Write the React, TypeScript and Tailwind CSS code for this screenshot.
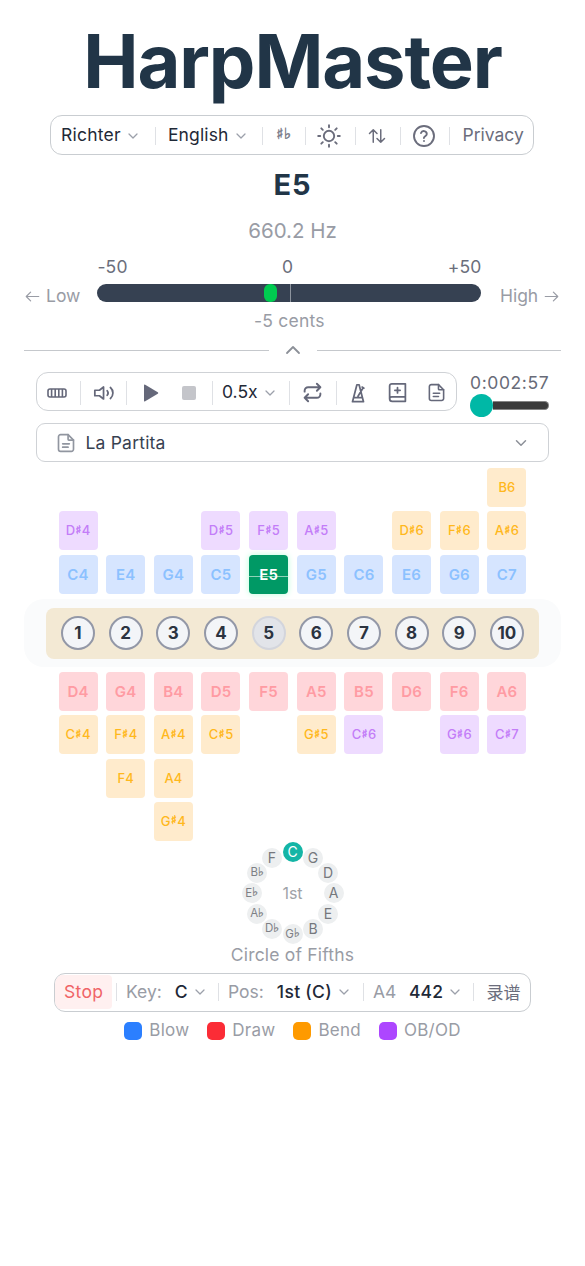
import React from 'react';
import { ChevronDown, ChevronUp } from 'lucide-react';

const noteStyles = {
  blow: 'bg-[#d6e5ff] text-[#8cc1ff] text-[15px] font-semibold tracking-[0.2px]',
  draw: 'bg-[#ffd6da] text-[#ff9ba3] text-[15px] font-semibold tracking-[0.2px]',
  bend: 'bg-[#ffebcc] text-[#ffb81c] text-[13px] font-medium',
  over: 'bg-[#eedbff] text-[#c37df8] text-[13px] font-medium',
};

type Kind = keyof typeof noteStyles;
type Cell = [string, Kind] | null;

const top: Cell[][] = [
  [null, null, null, null, null, null, null, null, null, ['B6', 'bend']],
  [['D♯4', 'over'], null, null, ['D♯5', 'over'], ['F♯5', 'over'], ['A♯5', 'over'], null, ['D♯6', 'bend'], ['F♯6', 'bend'], ['A♯6', 'bend']],
  ['C4', 'E4', 'G4', 'C5', 'E5', 'G5', 'C6', 'E6', 'G6', 'C7'].map((n): Cell => [n, 'blow']),
];

const bottom: Cell[][] = [
  ['D4', 'G4', 'B4', 'D5', 'F5', 'A5', 'B5', 'D6', 'F6', 'A6'].map((n): Cell => [n, 'draw']),
  [['C♯4', 'bend'], ['F♯4', 'bend'], ['A♯4', 'bend'], ['C♯5', 'bend'], null, ['G♯5', 'bend'], ['C♯6', 'over'], null, ['G♯6', 'over'], ['C♯7', 'over']],
  [null, ['F4', 'bend'], ['A4', 'bend'], null, null, null, null, null, null, null],
  [null, null, ['G♯4', 'bend'], null, null, null, null, null, null, null],
];

function NoteName({ name }: { name: string }) {
  const parts = name.split(/([♯♭])/);
  return (
    <span className="flex items-center whitespace-nowrap leading-none">
      {parts.map((p, i) =>
        p === '♯' ? <span key={i} className="-mt-[2px] px-[0.5px] text-[12px] leading-none font-bold [-webkit-text-stroke:0.5px] [font-family:'DejaVu_Sans',sans-serif]">♯</span>
        : p === '♭' ? <span key={i} className="-mt-[2px] text-[12px] leading-none font-bold [-webkit-text-stroke:0.3px] [font-family:'DejaVu_Sans',sans-serif]">♭</span>
        : <span key={i}>{p}</span>,
      )}
    </span>
  );
}

function NoteRows({ rows }: { rows: Cell[][] }) {
  return (
    <div className="ml-[58.5px] flex w-[468px] flex-col gap-[4.4px]">
      {rows.map((row, r) => (
        <div key={r} className="flex h-[39px] justify-between">
          {row.map((cell, c) => {
            if (!cell) return <div key={c} className="w-[39px]" />;
            if (cell[0] === 'E5')
              return (
                <div key={c} className="relative flex w-[39px] items-center justify-center rounded-[4px] bg-[#009965] text-[15px] font-semibold text-white shadow-[0_0_6px_#b8ffda]">
                  <div className="absolute inset-x-0 top-[21px] h-[1.5px] bg-[#8fd2b8]" />
                  <span className="relative leading-none">E5</span>
                </div>
              );
            return (
              <div key={c} className={`flex w-[39px] items-center justify-center rounded-[4px] ${noteStyles[cell[1]]}`}>
                <NoteName name={cell[0]} />
              </div>
            );
          })}
        </div>
      ))}
    </div>
  );
}

function Divider({ tall = false }: { tall?: boolean }) {
  return <div className={tall ? 'h-6 w-px shrink-0 bg-[#dfe1e5]' : 'h-[18px] w-px shrink-0 bg-[#dfe1e5]'} />;
}

function Chevron({ className = '' }: { className?: string }) {
  return <ChevronDown size={16} strokeWidth={1.9} className={`mx-px shrink-0 text-[#9ca0aa] ${className}`} />;
}

function Stroke({ size, width = 2, children, className = '' }: { size: number; width?: number; children: React.ReactNode; className?: string }) {
  return (
    <svg width={size} height={size} viewBox="0 0 24 24" fill="none" stroke="currentColor" strokeWidth={width} strokeLinecap="round" strokeLinejoin="round" className={`shrink-0 ${className}`}>
      {children}
    </svg>
  );
}

function PageIcon({ size, className = '' }: { size: number; className?: string }) {
  return (
    <Stroke size={size} className={className}>
      <path d="M14.5 2H5.5A2.5 2.5 0 0 0 3 4.5v15A2.5 2.5 0 0 0 5.5 22h13a2.5 2.5 0 0 0 2.500-2.500V8.500z" />
      <path d="M14.500 2v5.500a1 1 0 0 0 1 1H21M8 13h8M8 17h6.500" />
    </Stroke>
  );
}

const fifths = ['C', 'G', 'D', 'A', 'E', 'B', 'G♭', 'D♭', 'A♭', 'E♭', 'B♭', 'F'];

function CircleOfFifths() {
  return (
    <div className="relative mx-auto mt-[1.5px] h-[102px] w-[102px]">
      {fifths.map((name, i) => {
        const a = (i * Math.PI) / 6;
        return (
          <div
            key={name}
            className={`absolute flex h-5 w-5 items-center justify-center rounded-full ${
              i === 0 ? 'bg-[#14b5a6] text-[14px] text-white' : name.length > 1 ? 'bg-[#edeff0] text-[11.5px] text-[#7d8085]' : 'bg-[#edeff0] text-[14px] text-[#75787d]'
            }`}
            style={{ left: 41 + Math.sin(a) * 41, top: 41 - Math.cos(a) * 41 }}
          >
            <NoteName name={name} />
          </div>
        );
      })}
      <div className="flex h-full items-center justify-center text-[16px] text-[#a0a3a8]">1st</div>
    </div>
  );
}

function Legend({ color, label }: { color: string; label: string }) {
  return (
    <div className="flex items-center gap-[7px]">
      <div className={`h-[18px] w-[18px] rounded-[5px] ${color}`} />
      <span className="-mt-[2px] text-[17px] tracking-[0.25px]">{label}</span>
    </div>
  );
}

export default function App() {
  return (
    <div className="flex h-[1266px] w-[585px] flex-col overflow-hidden bg-white font-['Inter','Noto_Sans_CJK_SC',sans-serif] text-[#1f2937]">
      <h1 className="mt-[21px] h-20 shrink-0 text-center text-[74px] leading-[80px] font-bold tracking-[-1.1px] text-[#213547]">HarpMaster</h1>

      <div className="mt-[14px] ml-[50.4px] flex h-10 w-[484px] shrink-0 items-center rounded-[12px] border-[1.5px] border-[#c9cdd1] pt-px text-[17.5px]">
        <div className="flex w-[103.500px] items-center pl-[9.500px]"><span className="tracking-[0.25px]">Richter</span><Chevron className="ml-[4px]" /></div>
        <Divider />
        <div className="flex w-[106px] items-center pl-[12px]"><span className="tracking-[0.15px]">English</span><Chevron className="ml-[4px]" /></div>
        <Divider />
        <div className="flex w-[42px] items-center justify-center pb-[2px] text-[15px] leading-none font-bold tracking-[0.5px] text-[#7b7d8a] [-webkit-text-stroke:0.5px] [font-family:'DejaVu_Sans',sans-serif]">♯♭</div>
        <Divider />
        <div className="flex w-[49px] justify-center pr-[2px] text-[#6b6d7c]">
          <Stroke size={24} width={1.9}>
            <circle cx="12" cy="12" r="5.200" />
            <path d="M12 1.200v2M12 20.800v2M1.200 12h2M20.800 12h2M4.300 4.300l1.500 1.500M18.200 18.200l1.500 1.500M4.300 19.700l1.500-1.500M18.200 5.800l1.500-1.500" />
          </Stroke>
        </div>
        <Divider />
        <div className="flex w-[44px] justify-center pr-[2px] text-[#6b6d7c]">
          <Stroke size={20} width={1.8}>
            <path d="M7.500 19.500V4.500M3 9L7.500 4.500 12 9M16.500 4.500v15M12 15l4.500 4.500 4.500-4.500" />
          </Stroke>
        </div>
        <Divider />
        <div className="flex w-[48px] justify-center pr-[2px] text-[#6b6d7c]">
          <Stroke size={24} width={1.9}>
            <circle cx="12" cy="12" r="10" />
            <path d="M9 9a3 3 0 0 1 5.800 1c0 2-2.900 2.500-2.900 4M12 17h.01" />
          </Stroke>
        </div>
        <Divider />
        <div className="flex flex-1 justify-center pl-[3px] text-[#6b6d7c]"><span>Privacy</span></div>
      </div>

      <div className="mt-[12px] h-9 shrink-0 text-center text-[29px] leading-9 font-bold tracking-[0.8px] text-[#213547]">E5</div>
      <div className="mt-[13px] h-[30px] shrink-0 text-center text-[20.5px] leading-[30px] text-[#999ca5]">660.2 Hz</div>

      <div className="mt-[11px] flex h-[76px] shrink-0 text-[17.5px]">
        <div className="w-[97.4px] pt-[27px] pl-[25px] leading-[24px] whitespace-nowrap text-[#999ca5]">
          <div className="flex items-center gap-[6px]">
            <Stroke size={15} width={1.9}><path d="M22 12H2M9 5l-7 7 7 7" /></Stroke><span>Low</span>
          </div>
        </div>
        <div className="w-[384px]">
          <div className="flex h-[20px] items-center justify-between tracking-[0.15px] text-[#6b6e7b]"><span>-50</span><span>0</span><span>+50</span></div>
          <div className="mt-[7px] flex h-[18px] items-stretch rounded-full bg-[#364152]">
            <div className="ml-[167px] w-[12.500px] rounded-[6px] bg-[#00cb50]" />
            <div className="ml-[13px] w-px bg-[#8d949e]" />
          </div>
          <div className="mt-[9px] text-center leading-5 tracking-[0.25px] text-[#999ca5]">-5 cents</div>
        </div>
        <div className="flex-1 pt-[27px] pl-[18.500px] leading-[24px] whitespace-nowrap text-[#999ca5]">
          <div className="flex items-center gap-[6px]">
            <span>High</span><Stroke size={15} width={1.9}><path d="M2 12h20M15 5l7 7-7 7" /></Stroke>
          </div>
        </div>
      </div>

      <div className="mx-6 mt-[7px] flex h-5 shrink-0 items-center">
        <div className="h-px flex-1 bg-[#c5c8cc]" />
        <div className="flex w-[48px] justify-center text-[#8c9098]"><ChevronUp size={24} strokeWidth={1.8} /></div>
        <div className="h-px flex-1 bg-[#c5c8cc]" />
      </div>

      <div className="mt-[12px] ml-[36px] flex h-[39px] shrink-0 items-center">
        <div className="flex h-[39px] w-[421px] items-center rounded-[12px] border-[1.5px] border-[#cfd2d6] pt-[2px] text-[#65687a]">
          <div className="flex w-[43px] justify-center pr-[3px]">
            <svg width="20" height="10" viewBox="0 0 20 10" fill="none" stroke="currentColor" strokeWidth="1.6">
              <rect x="1" y="1" width="18" height="8" rx="2" />
              <path d="M4.600 1v8M8.200 1v8M11.800 1v8M15.400 1v8" />
            </svg>
          </div>
          <Divider tall />
          <div className="flex w-[45px] justify-center">
            <Stroke size={22} width={1.9}>
              <path d="M11.500 5.500v13L7 15H2V9h5zM15.500 9.500a4 4 0 0 1 0 5M19 6a8 8 0 0 1 0 12" />
            </Stroke>
          </div>
          <Divider tall />
          <div className="flex w-[85px] items-center pl-[16px]">
            <svg width="16" height="18" viewBox="0 0 16 18" fill="currentColor"><path d="M1 1.200Q1 0 2.200.7L14.800 8.200q1 .8 0 1.600L2.200 17.300Q1 18 1 16.800z" /></svg>
            <div className="ml-[23px] h-[14px] w-[14px] rounded-[2px] bg-[#c4c5ca]" />
          </div>
          <Divider tall />
          <div className="flex w-[76px] items-center pl-[9px] text-[17.5px] text-[#1f2937]"><span>0.5x</span><Chevron className="ml-[4px]" /></div>
          <Divider tall />
          <div className="flex w-[46px] justify-center pr-[2px]">
            <Stroke size={21} width={2.2}><path d="M17 2l4 4-4 4M3 11v-1a4 4 0 0 1 4-4h14M7 22l-4-4 4-4M21 13v1a4 4 0 0 1-4 4H3" /></Stroke>
          </div>
          <Divider tall />
          <div className="flex flex-1 items-center pl-[10px]">
            <Stroke size={22} width={1.9}><path d="M10.800 3h2.400l4.800 18.500H6zM7.500 17h9M12 15.500l5.500-9M16.500 5.500l2 1.200" /></Stroke>
            <Stroke size={21} className="ml-[18px]">
              <path d="M3 19V4.500A2.500 2.500 0 0 1 5.500 2H21v20H6a3 3 0 0 1-3-3 2.500 2.500 0 0 1 2.500-2H21M12 6.500v6M9 9.500h6" />
            </Stroke>
            <PageIcon size={19} className="ml-[18.500px]" />
          </div>
        </div>
        <div className="ml-[13px] w-[79px] pt-[8px]">
          <div className="flex h-[18px] items-center justify-between text-[17.5px] leading-[18px] tracking-[0.6px] text-[#686b78]"><span>0:00</span><span>2:57</span></div>
          <div className="mt-[1px] flex h-6 items-center">
            <div className="h-[23px] w-[23px] shrink-0 rounded-full bg-[#00b8a6]" />
            <div className="h-[9px] flex-1 rounded-r-full border border-l-0 border-[#858585] bg-[#3b3b3b]" />
          </div>
        </div>
      </div>

      <div className="mt-[12px] ml-[36px] flex h-[39px] w-[513px] shrink-0 items-center rounded-[9px] border-[1.5px] border-[#cfd2d6]">
        <PageIcon size={20} className="ml-[19px] text-[#9196a0]" />
        <span className="mt-[2px] ml-[9.500px] text-[17.5px] tracking-[0.2px] text-[#374151]">La Partita</span>
        <ChevronDown size={18} strokeWidth={2} className="mr-[18px] ml-auto text-[#8c9098]" />
      </div>

      <div className="mt-[6px] shrink-0"><NoteRows rows={top} /></div>

      <div className="mx-6 mt-[5.500px] flex h-[68px] shrink-0 items-center rounded-[20px] bg-[#fafbfc] px-[22px]">
        <div className="flex h-[51px] w-full items-center justify-between rounded-[8px] bg-[#f3e9d4] px-[15px]">
          {[1, 2, 3, 4, 5, 6, 7, 8, 9, 10].map((n) => (
            <div key={n} className={`flex h-[34px] w-[34px] items-center justify-center rounded-full border-2 text-[17px] font-bold text-[#2b3340] ${n === 5 ? 'border-[#d3d5dc] bg-[#e2e4e9]' : 'border-[#9398a7] bg-[#f3f5f8]'}`}>
              {n}
            </div>
          ))}
        </div>
      </div>

      <div className="mt-[4.500px] shrink-0"><NoteRows rows={bottom} /></div>

      <CircleOfFifths />
      <div className="h-[22px] shrink-0 text-center text-[17.5px] leading-[22px] tracking-[0.2px] text-[#999ca5]">Circle of Fifths</div>

      <div className="mt-[6.500px] ml-[54px] flex h-[39px] w-[477px] shrink-0 items-center overflow-hidden rounded-[11px] border-[1.5px] border-[#c9cdd1] text-[17.5px] whitespace-nowrap">
        <div className="flex h-[34px] w-[57px] items-center rounded-r-[4px] bg-[#fff0f0] pl-[9px] tracking-[0.3px] text-[#f06467]">Stop</div>
        <div className="w-[4px]" />
        <Divider />
        <div className="flex w-[101px] items-center pl-[9px]"><span className="text-[#999ca5]">Key:</span><span className="ml-[13px] font-medium">C</span><Chevron className="ml-[4px]" /></div>
        <Divider />
        <div className="flex w-[144px] items-center pl-[9px]"><span className="text-[#999ca5]">Pos:</span><span className="ml-[13px] font-medium tracking-[0.3px]">1st (C)</span><Chevron className="ml-[4px]" /></div>
        <Divider />
        <div className="flex w-[109px] items-center pl-[9px]"><span className="text-[#999ca5]">A4</span><span className="ml-[12.500px] font-medium tracking-[0.2px]">442</span><Chevron className="ml-[3.500px]" /></div>
        <Divider />
        <div className="flex flex-1 justify-center pt-[2px] pl-[3px] text-[17px] text-[#6b6d7c]">录谱</div>
      </div>

      <div className="mt-[7.500px] flex h-6 shrink-0 items-center justify-center gap-[18px] text-[#999ca5]">
        <Legend color="bg-[#2b7fff]" label="Blow" />
        <Legend color="bg-[#fb2c36]" label="Draw" />
        <Legend color="bg-[#fe9a00]" label="Bend" />
        <Legend color="bg-[#ad46ff]" label="OB/OD" />
      </div>
    </div>
  );
}
